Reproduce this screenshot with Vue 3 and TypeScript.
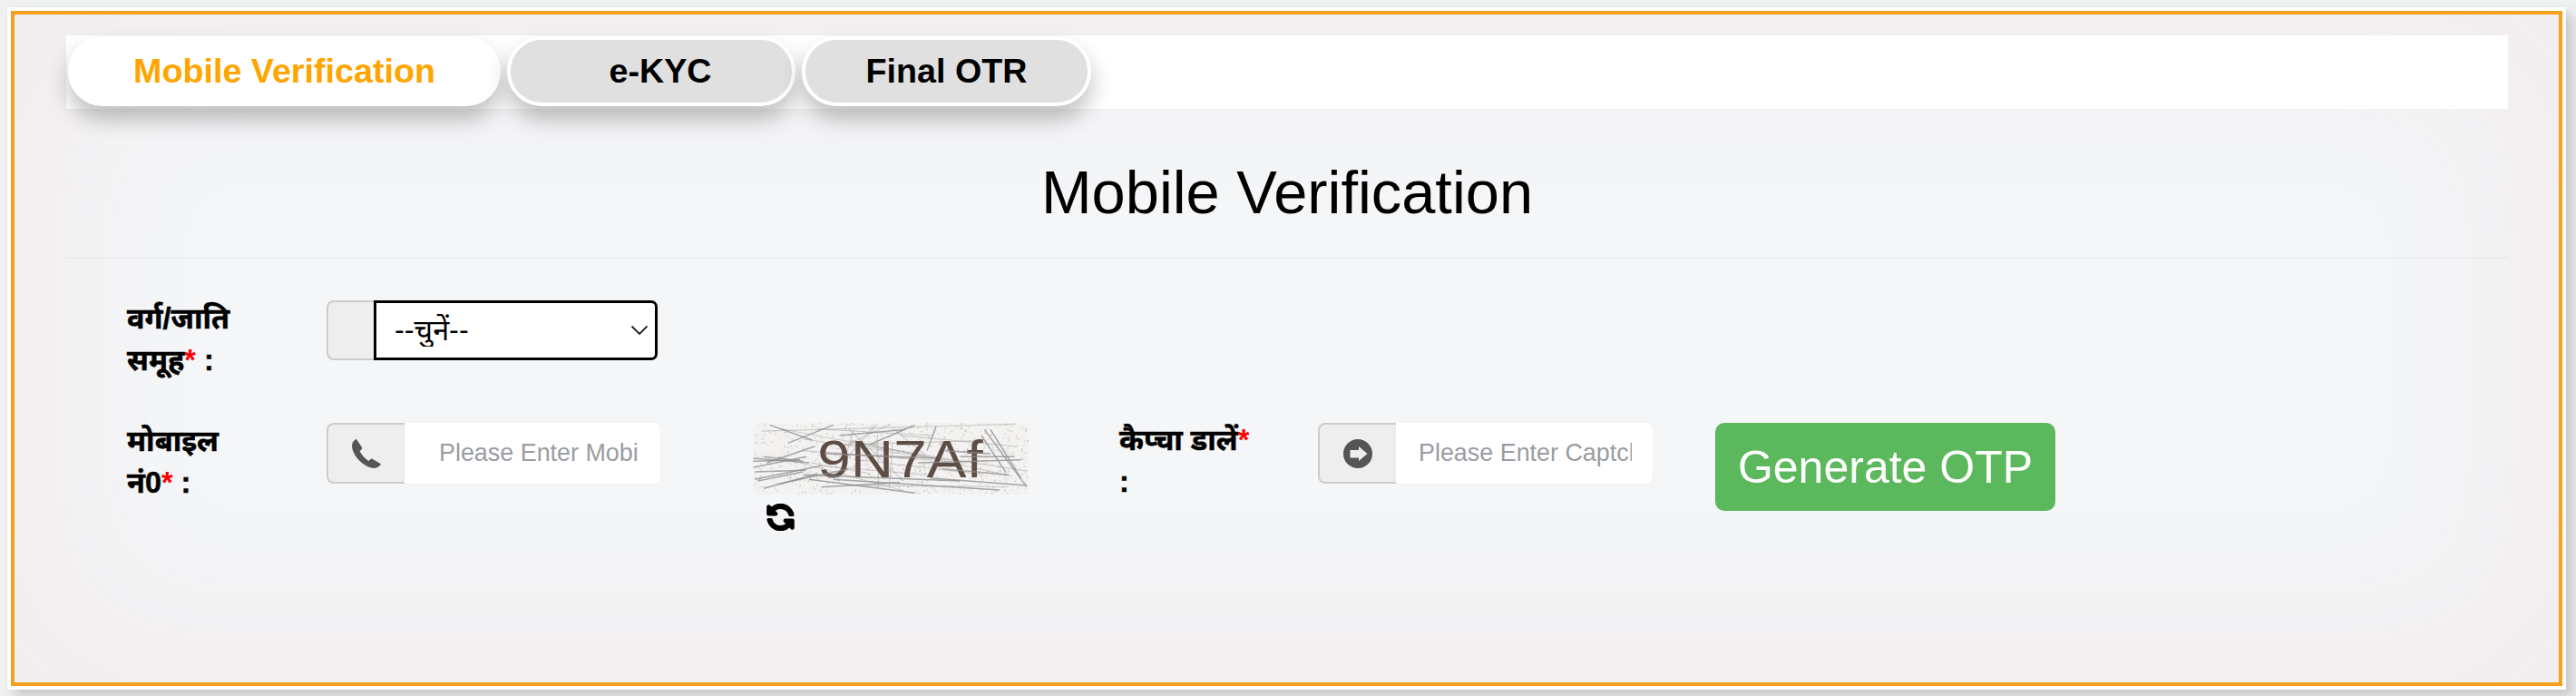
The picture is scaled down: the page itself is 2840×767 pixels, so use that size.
<script setup lang="ts">
const tabs = [
  { label: 'Mobile Verification', active: true },
  { label: 'e-KYC', active: false },
  { label: 'Final OTR', active: false }
]

// Seeded noise for the captcha picture (coordinates share the svg viewBox)
function rand(seed: number): number {
  const x = Math.sin(seed * 12.9898) * 43758.5453
  return x - Math.floor(x)
}
const strongLines: number[][] = [
  [70, 25, 210, 75], [130, 85, 280, 25], [15, 135, 200, 150], [15, 165, 190, 130],
  [50, 235, 230, 185], [20, 180, 190, 175], [50, 130, 180, 145], [280, 205, 830, 240],
  [200, 205, 550, 250], [400, 90, 550, 25], [590, 110, 620, 30], [780, 40, 920, 230],
  [800, 40, 900, 200], [770, 60, 850, 180], [700, 130, 880, 130], [650, 110, 800, 120],
  [600, 200, 920, 225], [240, 230, 500, 215], [30, 210, 180, 180], [640, 170, 860, 190],
  [15, 145, 170, 140], [300, 60, 520, 40], [560, 150, 900, 140], [100, 220, 330, 170],
  [180, 190, 700, 210], [250, 120, 620, 135], [60, 150, 220, 95], [20, 205, 240, 160]
]
const faintLines = Array.from({ length: 22 }, (_, i) => ({
  x1: 15 + rand(i + 1) * 500,
  y1: 18 + rand(i + 50) * 237,
  x2: 300 + rand(i + 100) * 625,
  y2: 18 + rand(i + 150) * 237
}))
const specks = Array.from({ length: 800 }, (_, i) => ({
  x: 15 + rand(i + 300) * 910,
  y: 18 + rand(i + 1800) * 237,
  o: 0.12 + rand(i + 3400) * 0.3
}))
</script>

<template>
  <div class="frame">
    <div class="inner">
      <nav class="tabbar">
        <button v-for="t in tabs" :key="t.label" class="tab" :class="{ active: t.active }">{{ t.label }}</button>
      </nav>

      <h1 class="title">Mobile Verification</h1>

      <div class="row row-one">
        <label class="lab lab-main">वर्ग/जाति समूह<span class="req">*</span> :</label>
        <div class="group">
          <span class="addon addon-narrow"></span>
          <div class="select-wrap">
            <select class="select">
              <option>--चुनें--</option>
            </select>
            <svg class="chev" viewBox="0 0 20 12" width="20" height="12" aria-hidden="true">
              <path d="M1.500 1.500 L10 10 L18.500 1.500" fill="none" stroke="#222" stroke-width="1.800" />
            </svg>
          </div>
        </div>
      </div>

      <div class="row row-two">
        <label class="lab lab-main">मोबाइल नं0<span class="req">*</span> :</label>
        <div class="group group-input">
          <span class="addon">
            <svg viewBox="0 0 32 32" width="32" height="32" aria-hidden="true">
              <path fill="#555" d="M5 0 L11 9 Q11.500 10.500 10 12 L8.500 13 Q12 20 18.500 24 L20 22.500 Q21.500 21 23 22 L31.500 27 Q32 28 31 29 Q28 32 25 32 C12 31 1 18 0 8 Q0 3 3 1 Q4 0 5 0 Z" />
            </svg>
          </span>
          <input class="field" type="text" placeholder="Please Enter Mobile No" />
        </div>

        <div class="captcha">
          <svg class="captcha-img" viewBox="15 18 910 237" width="304" height="79" aria-hidden="false">
            <rect x="15" y="18" width="910" height="237" fill="#f3f2f0" />
            <circle v-for="(s, i) in specks" :key="'s' + i" :cx="s.x" :cy="s.y" r="2.600" fill="#8a8a8a" :opacity="s.o" />
            <line v-for="(l, i) in faintLines" :key="'f' + i" :x1="l.x1" :y1="l.y1" :x2="l.x2" :y2="l.y2" stroke="#a5a5a5" stroke-width="3.500" opacity="0.5" />
            <text x="228" y="197" textLength="547" lengthAdjust="spacingAndGlyphs" class="captcha-text">9N7Af</text>
            <line v-for="(l, i) in strongLines" :key="'l' + i" :x1="l[0]" :y1="l[1]" :x2="l[2]" :y2="l[3]" stroke="#8c8c8c" stroke-width="4.500" opacity="0.75" />
          </svg>
          <svg class="refresh" viewBox="0 0 512 512" width="31" height="30" aria-hidden="true">
            <path fill="#000" stroke="#000" stroke-width="26" stroke-linejoin="round" d="M370.72 133.28C339.458 104.008 298.888 87.962 255.848 88c-77.458.068-144.328 53.178-162.791 126.85-1.344 5.363-6.122 9.15-11.651 9.15H24.103c-7.498 0-13.194-6.807-11.807-14.176C33.933 94.924 134.813 8 256 8c66.448 0 126.791 26.136 171.315 68.685L463.03 40.97C478.149 25.851 504 36.559 504 57.941V192c0 13.255-10.745 24-24 24H345.941c-21.382 0-32.09-25.851-16.971-40.971l41.75-41.749zM32 296h134.059c21.382 0 32.09 25.851 16.971 40.971l-41.75 41.75c31.262 29.273 71.835 45.319 114.876 45.28 77.418-.07 144.315-53.144 162.787-126.849 1.344-5.363 6.122-9.15 11.651-9.15h57.304c7.498 0 13.194 6.807 11.807 14.176C478.067 417.076 377.187 504 256 504c-66.448 0-126.791-26.136-171.315-68.685L48.97 471.03C33.851 486.149 8 475.441 8 454.059V320c0-13.255 10.745-24 24-24z" />
          </svg>
        </div>

        <label class="lab lab-captcha">कैप्चा डालें<span class="req">*</span> :</label>
        <div class="group group-input group-captcha">
          <span class="addon">
            <svg viewBox="0 0 32 32" width="32" height="32" aria-hidden="true">
              <circle cx="16" cy="16" r="16" fill="#555" />
              <path fill="#eee" d="M17 8 L26.500 16 L17 24 L17 20.500 L7.500 20.500 L7.500 12 L17 12 Z" />
            </svg>
          </span>
          <input class="field" type="text" placeholder="Please Enter Captcha" />
        </div>

        <button class="otp">Generate OTP</button>
      </div>
    </div>
  </div>
</template>

<style>
html, body {
  margin: 0;
  height: 767px;
  overflow: hidden;
  background: #eef0f2;
}
</style>

<style scoped>
.frame {
  box-sizing: border-box;
  width: 2821px;
  height: 752px;
  margin: 8px 0 0 8px;
  background: #fff;
  padding: 4px;
  box-shadow: 8px 8px 12px rgba(0, 0, 0, 0.16), 0 0 3px rgba(0, 0, 0, 0.05);
  font-family: "Liberation Sans", Arial, "Noto Sans", sans-serif;
}
.inner {
  box-sizing: border-box;
  height: 744px;
  border: 4px solid #f5a11c;
  padding: 23px 56px 0 57px;
  background: #f4f6f8;
  box-shadow: inset 0 0 150px 72px #f2edef;
}
.tabbar {
  display: flex;
  gap: 7px;
  height: 81px;
  background: #fff;
  padding: 1px 0 0 2px;
  box-sizing: border-box;
}
.tab {
  box-sizing: border-box;
  width: 318px;
  height: 77px;
  border: 4px solid #fff;
  border-radius: 38px;
  background: #e0e0e0;
  color: #000;
  font: bold 37.7px "Liberation Sans", Arial, sans-serif;
  box-shadow: 0 14px 24px rgba(0, 0, 0, 0.25);
  padding: 0;
}
.tab:nth-child(2) { padding-left: 20px; }
.tab:nth-child(3) { width: 319px; }
.tab.active {
  width: 477px;
  background: #fff;
  color: #ffa500;
}
.title {
  margin: 0;
  height: 165px;
  line-height: 184px;
  box-sizing: border-box;
  border-bottom: 2px solid rgba(0, 0, 0, 0.03);
  font-weight: 400;
  font-size: 66.8px;
  text-align: center;
  color: #000;
}
.row {
  display: flex;
  align-items: flex-start;
}
.row-one { margin-top: 46px; }
.row-two { margin-top: 46px; }
.lab {
  font-weight: 700;
  font-size: 32.4px;
  line-height: 46px;
  color: #000;
  -webkit-text-stroke: 0.5px #000;
  font-family: "Liberation Sans", "Noto Sans", "Noto Sans Devanagari", "Lohit Devanagari", sans-serif;
}
.lab-main {
  width: 140px;
  margin-left: 67px;
  margin-right: 80px;
  margin-top: -3px;
}
.lab-captcha {
  width: 152px;
  margin-left: 100px;
  margin-right: 67px;
  margin-top: -4px;
}
.req {
  color: #f00;
  -webkit-text-stroke: 0;
}
.group {
  display: flex;
  width: 365px;
  height: 66px;
}
.group-input {
  width: 368px;
  height: 67px;
}
.group-captcha { width: 369px; }
.addon {
  box-sizing: border-box;
  width: 86px;
  flex: none;
  display: flex;
  align-items: center;
  justify-content: center;
  background: #eee;
  border: 2px solid #ccc;
  border-right: 0;
  border-radius: 8px 0 0 8px;
}
.addon-narrow { width: 52px; }
.select-wrap {
  flex: 1;
  min-width: 0;
  position: relative;
  display: flex;
}
.select {
  flex: 1;
  min-width: 0;
  box-sizing: border-box;
  appearance: none;
  border: 3px solid #000;
  border-radius: 0 7px 7px 0;
  background: #fff;
  padding: 0 40px 0 20px;
  font-size: 32.4px;
  color: #000;
  outline: none;
  font-family: "Liberation Sans", "Noto Sans", "Noto Sans Devanagari", sans-serif;
}
.chev {
  position: absolute;
  right: 10px;
  top: 27px;
  pointer-events: none;
}
.field {
  flex: 1;
  min-width: 0;
  box-sizing: border-box;
  border: 0;
  outline: none;
  background: #fff;
  border-radius: 0 8px 8px 0;
  padding: 0 23px 0 38px;
  font: 400 26.9px "Liberation Sans", Arial, sans-serif;
  box-shadow: 0 0 2px rgba(0, 0, 0, 0.06);
}
.group-captcha .field { padding: 0 23px 0 25px; }
.field::placeholder {
  color: #999ca1;
  opacity: 1;
}
.captcha {
  width: 304px;
  margin-left: 102px;
  display: flex;
  flex-direction: column;
  align-items: flex-start;
}
.captcha-img {
  display: block;
  filter: blur(0.6px);
}
.captcha-text {
  font: 400 174px "Liberation Sans", Arial, sans-serif;
  fill: #5e4d45;
}
.refresh {
  margin: 10px 0 0 15px;
  transform: scaleX(-1);
}
.otp {
  box-sizing: border-box;
  width: 375px;
  height: 97px;
  margin-left: 69px;
  border: 0;
  border-radius: 10px;
  background: #5cb85c;
  color: #fff;
  font: 400 50px "Liberation Sans", Arial, sans-serif;
  padding: 0;
}
</style>
